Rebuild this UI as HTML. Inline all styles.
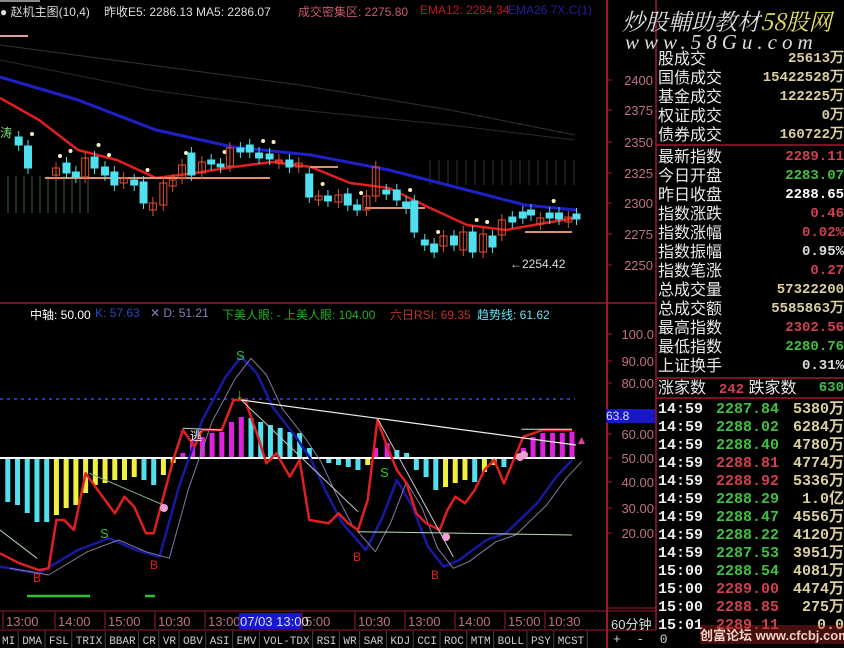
<!DOCTYPE html>
<html><head><meta charset="utf-8">
<style>
*{margin:0;padding:0}
body{width:844px;height:648px;background:#000;overflow:hidden;position:relative;font-family:"Liberation Sans","Noto Sans CJK SC",sans-serif}
.a{position:absolute;white-space:nowrap}
#rp div.r{position:absolute;left:658px;width:186px;height:19px;font-size:16px;line-height:19px;color:#e8e8e8}
#rp div.r span{position:absolute;right:0;font-family:"Liberation Mono",monospace;font-weight:bold;font-size:14px}
.tk{position:absolute;left:658px;width:186px;height:18px;font-family:"Liberation Mono",monospace;font-weight:bold;font-size:15px;line-height:18px}
</style></head><body>
<svg id="s" width="844" height="648" style="position:absolute;left:0;top:0" xmlns="http://www.w3.org/2000/svg"></svg>
<div class="a" style="left:0;top:3px;font-size:12px;color:#ddd">● 赵机主图(10,4)</div>
<div class="a" style="left:104px;top:3px;font-size:12px;color:#ddd">昨收E5: 2286.13 MA5: 2286.07</div>
<div class="a" style="left:298px;top:3px;font-size:12px;color:#c85a6a">成交密集区: 2275.80</div>
<div class="a" style="left:420px;top:3px;font-size:12px;color:#c01818">EMA12: 2284.34</div>
<div class="a" style="left:508px;top:3px;font-size:12px;color:#2020a0">EMA26 7X.C(1)</div>
<div class="a" style="left:30px;top:306px;font-size:12px;color:#fff">中轴: 50.00</div>
<div class="a" style="left:95px;top:306px;font-size:12px;color:#2848c0">K: 57.63</div>
<div class="a" style="left:150px;top:306px;font-size:12px;color:#8080c0">✕ D: 51.21</div>
<div class="a" style="left:222px;top:306px;font-size:12px;color:#20b020">下美人眼: - 上美人眼: 104.00</div>
<div class="a" style="left:390px;top:306px;font-size:12px;color:#c03030">六日RSI: 69.35</div>
<div class="a" style="left:477px;top:306px;font-size:12px;color:#60e0f0">趋势线: 61.62</div>
<div class="a" style="left:622px;top:4px;font-size:23px;font-style:italic;color:#ddd;font-family:'Noto Serif CJK SC',serif">炒股輔助教材<span style="color:#e8e060">58股网</span></div>
<div class="a" style="left:625px;top:30px;font-size:21px;font-style:italic;letter-spacing:5px;color:#ddd;font-family:'Liberation Serif',serif">www.58Gu.com</div>
<div id="rp"></div>
<div class="a" style="left:510px;top:257px;font-size:12px;color:#ddd">←2254.42</div>
<div class="a" style="left:606px;top:409px;width:49px;height:14px;background:#1818c8;color:#ddd;font-size:12px;line-height:14px">63.8</div>
<div class="a" style="left:611px;top:614px;font-size:13px;color:#ddd">60分钟</div>
<div class="a" style="left:613px;top:632px;font-size:13px;color:#ccc;font-family:'Liberation Mono',monospace">+ &nbsp;- &nbsp;0</div>
<div class="a" style="left:700px;top:625px;font-size:13px;font-weight:bold;color:#f0d0c0;background:rgba(200,40,40,.35)">创富论坛 www.cfcbj.com</div>
<script>
const S=document.getElementById('s');let h='';
const L=(x1,y1,x2,y2,c,w,d)=>h+=`<line x1="${x1}" y1="${y1}" x2="${x2}" y2="${y2}" stroke="${c}" stroke-width="${w||1}" ${d?'stroke-dasharray="'+d+'"':''}/>`;
const P=(pts,c,w,sx,sy,oy)=>h+=`<polyline fill="none" stroke="${c}" stroke-width="${w}" stroke-linejoin="round" points="${pts.map(p=>(p[0]/(sx||1)).toFixed(1)+','+(p[1]/(sy||1)+(oy||0)).toFixed(1)).join(' ')}"/>`;
const T=(x,y,t,c,s,a)=>h+=`<text x="${x}" y="${y}" fill="${c}" font-size="${s||12}" ${a?'text-anchor="end"':''} font-family="Liberation Sans,Noto Sans CJK SC,sans-serif">${t}</text>`;
L(0,1,40,1,'#888',2);L(0,36,28,36,'#e0a0a0',2);
L(607,0,607,648,'#a01830',2);L(656,0,656,630,'#a01830',1.5);
L(0,303,656,303,'#a01830',1.5);
L(0,611,656,611,'#a01830',1);L(0,630,656,630,'#a01830',1);
L(656,145,844,145,'#a01830',1.5);L(656,378,844,378,'#a01830',1.5);L(656,398,844,398,'#a01830',1.5);
L(606,608,656,608,'#a01830',1);
[[2400,80],[2375,110],[2350,142],[2325,173],[2300,203],[2275,234],[2250,265]].forEach(a=>{T(653,a[1]+5,a[0],'#c07080',13,1);L(608,a[1],612,a[1],'#a01830')});
[['100.0',334],['90.00',361],['80.00',383],['60.00',434],['50.00',458],['40.00',482],['30.00',508],['20.00',533]].forEach(a=>{T(654,a[1]+5,a[0],'#c07080',13,1);L(608,a[1],612,a[1],'#a01830')});
P([[0,45],[150,65],[300,85],[450,110],[575,135]],'#333',1);P([[0,60],[150,90],[300,110],[450,125],[575,140]],'#2a2a2a',1);
for(let x=8;x<95;x+=8)L(x,176,x,213,'#406040');
for(let x=430;x<575;x+=9)L(x,160,x,185,'#303830');
P([[0,77],[78,100],[156,130],[233,147],[311,155],[389,170],[467,190],[525,205],[576,210]],'#2020c8',3);
P([[0,98],[39,120],[78,150],[117,160],[156,178],[195,173],[233,167],[272,162],[311,167],[350,183],[389,188],[428,207],[467,225],[506,230],[545,223],[576,218]],'#e02020',2.5);
L(45,178,270,178,'#e09070',2);L(310,167,338,167,'#e09070',2);L(365,208,425,208,'#e09070',2);L(525,232,572,232,'#e09070',2);
const cs=[[16,137,145,'c'],[24,146,168,'c'],[48,168,175,'r'],[57,163,173,'c'],[65,172,177,'c'],[73,158,177,'r'],[81,157,168,'c'],[90,167,175,'c'],[98,172,185,'c'],[106,178,183,'r'],[115,180,185,'c'],[123,182,203,'c'],[131,203,210,'r'],[140,183,205,'r'],[148,180,186,'r'],[156,165,178,'r'],[164,153,175,'c'],[173,162,173,'r'],[181,160,164,'c'],[189,164,167,'c'],[197,148,166,'r'],[206,148,152,'c'],[214,145,152,'c'],[222,153,158,'c'],[231,154,159,'c'],[239,160,163,'f'],[248,160,167,'c'],[256,163,167,'r'],[265,174,197,'c'],[273,196,200,'r'],[281,196,201,'c'],[290,195,202,'r'],[298,194,205,'c'],[306,205,210,'c'],[314,196,210,'r'],[322,167,196,'r'],[331,190,194,'c'],[340,190,200,'c'],[348,202,208,'c'],[355,201,232,'c'],[364,240,245,'c'],[372,244,252,'c'],[380,236,246,'r'],[389,236,245,'c'],[397,232,250,'r'],[405,232,252,'c'],[414,234,252,'r'],[422,236,247,'c'],[430,220,235,'r'],[439,217,222,'c'],[448,212,218,'c'],[455,210,215,'c'],[463,218,224,'r'],[471,213,218,'c'],[479,213,219,'c'],[487,217,222,'r'],[494,214,219,'c']];
cs.forEach(c=>{const x=c[0]*1.167,col=c[3]=='c'?'#50e0f0':'#e05030';L(x,c[1]-6,x,c[2]+6,col);
h+=`<rect x="${x-3.5}" y="${c[1]}" width="7" height="${c[2]-c[1]}" fill="${c[3]=='r'?'none':(c[3]=='f'?'#e02020':'#50e0f0')}" stroke="${col}"/>`;
if(c[0]%3==0)h+=`<circle cx="${x+4}" cy="${c[1]-12}" r="2" fill="#fff0c0"/>`;});
T(0,137,'涛','#80e080',12);
L(0,399,575,399,'#3030c0',2,'3,4');
const bars=[[20,502,'c'],[45,505,'c'],[70,513,'c'],[95,522,'c'],[120,522,'c'],[145,515,'y'],[170,508,'y'],[195,505,'y'],[220,493,'y'],[245,485,'y'],[270,483,'y'],[295,480,'y'],[320,480,'y'],[345,477,'y'],[370,480,'c'],[395,485,'c'],[420,475,'y'],[445,463,'y'],[470,453,'m'],[495,440,'m'],[520,437,'m'],[545,433,'m'],[570,432,'m'],[595,422,'m'],[620,417,'m'],[645,418,'c'],[670,422,'c'],[695,425,'c'],[720,428,'c'],[745,432,'c'],[770,433,'c'],[795,448,'c'],[845,463,'c'],[870,465,'c'],[895,467,'c'],[920,470,'c'],[945,465,'y'],[965,448,'m'],[995,443,'m'],[1020,450,'c'],[1045,453,'c'],[1070,470,'c'],[1095,477,'c'],[1120,490,'c'],[1145,487,'y'],[1170,483,'y'],[1195,480,'y'],[1220,482,'c'],[1245,472,'y'],[1270,465,'y'],[1295,467,'c'],[1345,448,'m'],[1370,437,'m'],[1395,433,'m'],[1420,433,'m'],[1445,433,'m'],[1470,432,'m']];
bars.forEach(b=>{const x=b[0]/2.57,c={c:'#50e0f0',y:'#f0f040',m:'#e020e0'}[b[2]];const y1=Math.min(458,b[1]),y2=Math.max(458,b[1]);h+=`<rect x="${x-2.5}" y="${y1}" width="5" height="${y2-y1}" fill="${c}"/>`;});
L(0,458,575,458,'#fff',2);
const bl=[[0,740],[100,760],[200,690],[280,655],[350,690],[410,710],[460,500],[520,300],[580,170],[620,110],[660,160],[700,260],[760,350],[800,420],[840,520],[880,610],[940,690],[980,600],[1020,480],[1060,560],[1100,680],[1140,740],[1180,720],[1250,660],[1300,640],[1380,550],[1430,470],[1470,420]];
P(bl,'#1818a0',2.5,2.57,3,320);P(bl.map(p=>[p[0]+25,p[1]+5]),'#8878a0',1,2.57,3,320);
P([[0,700],[50,730],[100,750],[125,745],[145,600],[165,600],[190,630],[220,460],[245,500],[295,580],[320,530],[345,560],[375,640],[395,640],[420,530],[445,420],[470,330],[500,380],[520,330],[570,330],[600,240],[630,240],[660,340],[685,430],[710,400],[745,470],[770,420],[795,600],[845,610],[870,580],[895,610],[920,630],[945,540],[970,300],[995,380],[1020,450],[1045,490],[1070,580],[1095,610],[1130,630],[1150,570],[1170,530],[1195,550],[1220,510],[1245,450],[1270,420],[1295,490],[1320,420],[1345,350],[1395,330],[1470,330]],'#e02020',2.5,2.57,3,320);
P([[620,240],[970,295],[1480,375]],'#eee',1.2,2.57,3,320);P([[620,240],[920,575]],'#ccc',1,2.57,3,320);P([[970,295],[1165,710]],'#ccc',1,2.57,3,320);
P([[470,325],[570,330]],'#ccc',1,2.57,3,320);P([[0,630],[95,715]],'#bdb',1,2.57,3,320);P([[230,460],[420,555]],'#8a8',1,2.57,3,320);P([[920,635],[1470,645]],'#bdb',1,2.57,3,320);P([[1340,328],[1470,328]],'#ddd',1,2.57,3,320);
T(236,360,'S','#30c030',13);T(100,538,'S','#30c030',13);T(380,477,'S','#30c030',13);
[[33,582],[150,569],[353,561],[431,579]].forEach(p=>T(p[0],p[1],'B','#e02020',12));
T(236,399,'↓','#30e030',15);T(190,440,'逃','#f0f0c0',12);
[[164,508],[446,537],[520,457],[524,455]].forEach(p=>h+=`<circle cx="${p[0]}" cy="${p[1]}" r="4" fill="#f0a0d0"/>`);
h+=`<polygon points="578,444 585,444 581.5,437" fill="#e040a0"/>`;
L(27,596,90,596,'#30c030',2.5);L(145,596,155,596,'#30c030',2.5);
[['13:00',3],['14:00',55],['15:00',105],['10:30',155],['13:00',205],['5:00',302],['10:30',355],['13:00',405],['14:00',455],['15:00',505],['10:30',545]].forEach(a=>{T(a[1]+3,626,a[0],'#c07080',13);L(a[1],612,a[1],629,'#a01830')});
h+=`<rect x="239" y="613" width="62" height="16" fill="#1818c8"/>`;T(240,626,'07/03 13:00','#ddd',13);
let tx=0;['MI','DMA','FSL','TRIX','BBAR','CR','VR','OBV','ASI','EMV','VOL-TDX','RSI','WR','SAR','KDJ','CCI','ROC','MTM','BOLL','PSY','MCST'].forEach(t=>{h+=`<text x="${tx+2}" y="644" fill="#ccc" font-size="11" font-family="Liberation Mono,monospace">${t}</text>`;tx+=t.length*6.6+7;L(tx-2,631,tx-2,648,'#444')});
S.innerHTML=h;
const rp=document.getElementById('rp');let r='';
const rows=[['股成交','25613万','#ddd0a0',50],['国债成交','15422528万','#ddd0a0',69],['基金成交','122225万','#ddd0a0',88],['权证成交','0万','#ddd0a0',107],['债券成交','160722万','#ddd0a0',126],
['最新指数','2289.11','#d04050',148],['今日开盘','2283.07','#40c040',167],['昨日收盘','2288.65','#fff',186],['指数涨跌','0.46','#d04050',205],['指数涨幅','0.02%','#d04050',224],['指数振幅','0.95%','#ddd',243],['指数笔涨','0.27','#d04050',262],['总成交量','57322200','#ddd0a0',281],['总成交额','5585863万','#ddd0a0',300],['最高指数','2302.56','#d04050',319],['最低指数','2280.76','#40c040',338],['上证换手','0.31%','#ddd',357]];
rows.forEach(a=>r+=`<div class="r" style="top:${a[3]}px">${a[0]}<span style="color:${a[2]}">${a[1]}</span></div>`);
r+=`<div class="r" style="top:379px">涨家数 <b style="color:#d04050;font-family:Liberation Mono;font-size:14px">&nbsp;242</b> 跌家数<span style="color:#40c040">630</span></div>`;
const tk=[['14:59','2287.84','g','5380'],['14:59','2288.02','g','6284'],['14:59','2288.40','g','4780'],['14:59','2288.81','r','4774'],['14:59','2288.92','r','5336'],['14:59','2288.29','g','1.0亿'],['14:59','2288.47','g','4556'],['14:59','2288.22','g','4120'],['14:59','2287.53','g','3951'],['15:00','2288.54','g','4081'],['15:00','2289.00','r','4474'],['15:00','2288.85','r','275'],['15:01','2289.11','r','0.0']];
tk.forEach((a,i)=>{const v=a[3].includes('亿')||a[3]=='0.0'?a[3]:a[3]+'万';r+=`<div class="tk" style="top:${401+i*18}px;color:#eee">${a[0]}<span style="position:absolute;left:58px;color:${a[2]=='g'?'#40c040':'#d04050'}">${a[1]}</span><span style="position:absolute;right:0;color:#ddd0a0;font-family:'Liberation Mono','Noto Sans CJK SC',monospace">${v}</span></div>`});
rp.innerHTML=r;
</script>
</body></html>
